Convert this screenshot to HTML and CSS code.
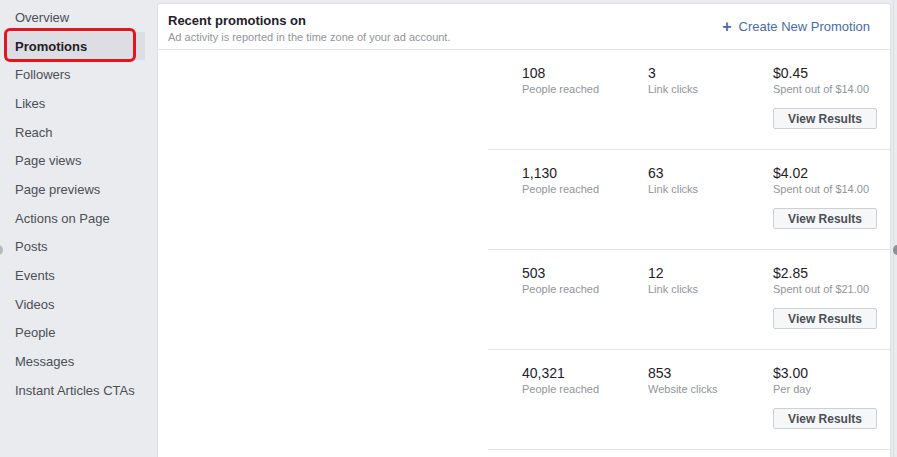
FILE: index.html
```html
<!DOCTYPE html>
<html lang="en">
<head>
    <meta charset="UTF-8">
    <title>Promotions</title>
    <link rel="stylesheet" href="styles.css">
</head>
<body>
    <div class="page">
        <!-- left navigation -->
        <ul class="nav">
            <li class="nav-item">Overview</li>
            <li class="nav-item active">Promotions<span class="marker"></span></li>
            <li class="nav-item">Followers</li>
            <li class="nav-item">Likes</li>
            <li class="nav-item">Reach</li>
            <li class="nav-item">Page views</li>
            <li class="nav-item">Page previews</li>
            <li class="nav-item">Actions on Page</li>
            <li class="nav-item">Posts</li>
            <li class="nav-item">Events</li>
            <li class="nav-item">Videos</li>
            <li class="nav-item">People</li>
            <li class="nav-item">Messages</li>
            <li class="nav-item">Instant Articles CTAs</li>
        </ul>

        <!-- promotions card -->
        <div class="card">
            <div class="card-head">
                <div>
                    <h2 class="title">Recent promotions on</h2>
                    <p class="subtitle">Ad activity is reported in the time zone of your ad account.</p>
                </div>
                <a class="create"><span class="plus">+</span>Create New Promotion</a>
            </div>

            <div class="promo">
                <div class="stat"><span class="num">108</span><span class="lbl">People reached</span></div>
                <div class="stat"><span class="num">3</span><span class="lbl">Link clicks</span></div>
                <div class="stat"><span class="num">$0.45</span><span class="lbl">Spent out of $14.00</span><button class="btn">View Results</button></div>
            </div>
            <div class="promo">
                <div class="stat"><span class="num">1,130</span><span class="lbl">People reached</span></div>
                <div class="stat"><span class="num">63</span><span class="lbl">Link clicks</span></div>
                <div class="stat"><span class="num">$4.02</span><span class="lbl">Spent out of $14.00</span><button class="btn">View Results</button></div>
            </div>
            <div class="promo">
                <div class="stat"><span class="num">503</span><span class="lbl">People reached</span></div>
                <div class="stat"><span class="num">12</span><span class="lbl">Link clicks</span></div>
                <div class="stat"><span class="num">$2.85</span><span class="lbl">Spent out of $21.00</span><button class="btn">View Results</button></div>
            </div>
            <div class="promo">
                <div class="stat"><span class="num">40,321</span><span class="lbl">People reached</span></div>
                <div class="stat"><span class="num">853</span><span class="lbl">Website clicks</span></div>
                <div class="stat"><span class="num">$3.00</span><span class="lbl">Per day</span><button class="btn">View Results</button></div>
            </div>
        </div>

        <div class="gutter"></div>
    </div>

    <span class="nub nub-left"></span>
    <span class="nub nub-right"></span>
</body>
</html>
```

FILE: styles.css
```css
body {
    margin: 0;
    background-color: #e9ebee;
    font-family: 'Liberation Sans', Arial, sans-serif;
    overflow: hidden;
}

.page {
    display: flex;
    align-items: flex-start;
    height: 457px;
}

/* 左侧导航 */
.nav {
    list-style: none;
    margin: 0;
    padding: 3px 12px 0 5px;
    width: 140px;
    flex-shrink: 0;
}

.nav-item {
    position: relative;
    display: flex;
    align-items: center;
    height: 28.7px;
    padding-left: 10px;
    font-size: 13px;
    color: #4b4f56;
}

.nav-item.active {
    background-color: #dcdee3;
    border-left: 2px solid #4267b2;
    padding-left: 8px;
    font-weight: bold;
    color: #1d2129;
}

/* red annotation box */
.marker {
    position: absolute;
    left: -3px;
    top: -4px;
    width: 126px;
    height: 28px;
    border: 3px solid #e8141c;
    border-radius: 6px;
}

/* 卡片 */
.card {
    margin-top: 3px;
    width: 732px;
    height: 470px;
    background-color: #fff;
    border: 1px solid #dddfe2;
    border-radius: 3px 3px 0 0;
    flex-shrink: 0;
}

.card-head {
    display: flex;
    justify-content: space-between;
    align-items: flex-start;
    height: 45px;
    padding: 0 20px 0 10px;
    border-bottom: 1px solid #e5e5e5;
}

.title {
    margin: 8px 0 0;
    font-size: 13px;
    line-height: 17px;
    color: #1d2129;
}

.subtitle {
    margin: 1px 0 0;
    font-size: 11px;
    line-height: 14px;
    color: #90949c;
}

.create {
    display: flex;
    align-items: center;
    margin-top: 14px;
    font-size: 13px;
    line-height: 18px;
    color: #4b6aa8;
}

.plus {
    margin-right: 7px;
    font-size: 16px;
    font-weight: bold;
}

.promo {
    display: grid;
    grid-template-columns: 126px 125px 104px;
    height: 99px;
    margin-left: 330px;
    padding-left: 34px;
    border-bottom: 1px solid #e5e5e5;
}

.stat {
    display: flex;
    flex-direction: column;
    align-items: flex-start;
    padding-top: 15px;
}

.num {
    font-size: 14px;
    line-height: 17px;
    color: #1d2129;
}

.lbl {
    font-size: 11px;
    line-height: 14px;
    color: #90949c;
}

.btn {
    margin-top: 12px;
    width: 104px;
    height: 21px;
    padding: 0;
    background-color: #f6f7f9;
    border: 1px solid #ced0d4;
    border-radius: 2px;
    font-family: inherit;
    font-size: 12px;
    font-weight: bold;
    color: #4b4f56;
}

.gutter {
    margin-left: 2px;
    width: 1px;
    height: 457px;
    background-color: #dcdee2;
}

/* 两边的小圆点 */
.nub {
    position: absolute;
    top: 245px;
    width: 8px;
    height: 10px;
    border-radius: 50%;
    background-color: #8d9096;
}

.nub-left { left: -5px; background-color: #b7b9bd; }
.nub-right { left: 893px; }
```
